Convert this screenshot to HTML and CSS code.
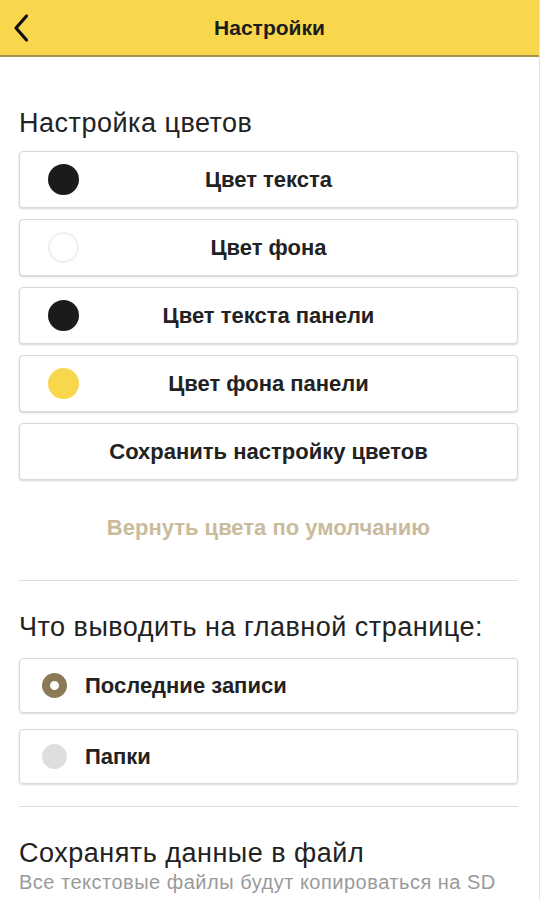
FILE: index.html
```html
<!DOCTYPE html>
<html lang="ru">
<head>
<meta charset="utf-8">
<title>Настройки</title>
<link rel="stylesheet" href="styles.css">
</head>
<body>
<div class="page">
  <header class="topbar">
    <button class="back" aria-label="Назад">
      <svg width="18" height="30" viewBox="0 0 18 30"><path d="M14.5 3 L4 15 L14.5 27" fill="none" stroke="#111" stroke-width="3.2" stroke-linecap="round" stroke-linejoin="round"/></svg>
    </button>
    <h1 class="title">Настройки</h1>
    <span class="spacer"></span>
  </header>

  <main class="content">
    <section class="section colors">
      <h2 class="section-title">Настройка цветов</h2>
      <div class="btn-list">
        <button class="btn"><span class="dot dot-black"></span><span class="btn-label">Цвет текста</span></button>
        <button class="btn"><span class="dot dot-white"></span><span class="btn-label">Цвет фона</span></button>
        <button class="btn"><span class="dot dot-black"></span><span class="btn-label">Цвет текста панели</span></button>
        <button class="btn"><span class="dot dot-yellow"></span><span class="btn-label">Цвет фона панели</span></button>
        <button class="btn"><span></span><span class="btn-label">Сохранить настройку цветов</span></button>
      </div>
      <div class="reset">Вернуть цвета по умолчанию</div>
    </section>

    <hr class="divider">

    <section class="section home">
      <h2 class="section-title">Что выводить на главной странице:</h2>
      <div class="radio-list">
        <label class="radio-row"><span class="radio radio-on"></span><span class="radio-label">Последние записи</span></label>
        <label class="radio-row"><span class="radio radio-off"></span><span class="radio-label">Папки</span></label>
      </div>
    </section>

    <hr class="divider">

    <section class="section file">
      <h2 class="section-title">Сохранять данные в файл</h2>
      <p class="hint">Все текстовые файлы будут копироваться на SD карту в отдельную папку</p>
    </section>
  </main>
</div>
</body>
</html>
```

FILE: styles.css
```css
* { box-sizing: border-box; }

html, body {
  margin: 0;
  padding: 0;
  background: #fff;
  height: 900px;
  overflow: hidden;
}

body {
  font-family: "Liberation Sans", Arial, sans-serif;
  color: #222;
}

.page {
  width: 540px;
  min-height: 900px;
  border-right: 1px solid #e4e4e4;
}

.topbar {
  height: 57px;
  background: #f8d74c;
  border-bottom: 2px solid #a99147;
  display: grid;
  grid-template-columns: 50px 1fr 50px;
  align-items: center;
  width: 539px;
}

.back {
  border: 0;
  background: none;
  padding: 0 0 0 12px;
  height: 55px;
  display: flex;
  align-items: center;
  cursor: pointer;
}

.title {
  margin: 0;
  text-align: center;
  font-size: 21px;
  font-weight: bold;
  color: #1c1c1c;
}

.content {
  padding: 0 21px 0 19px;
}

.section-title {
  margin: 0;
  font-size: 27px;
  font-weight: normal;
  letter-spacing: 0.5px;
  line-height: 28px;
  color: #222;
  white-space: nowrap;
}

.colors { padding-top: 52px; }
.colors .section-title { margin-bottom: 14px; }

.btn-list {
  display: flex;
  flex-direction: column;
  gap: 11px;
}

.btn {
  height: 57px;
  width: 100%;
  background: #fff;
  border: 1px solid #d9d9d9;
  border-radius: 4px;
  box-shadow: 0 1px 2px rgba(0,0,0,0.18);
  display: grid;
  grid-template-columns: 1fr auto 1fr;
  align-items: center;
  padding: 0 28px;
  font-family: inherit;
  cursor: pointer;
}

.btn-label {
  font-size: 22px;
  font-weight: bold;
  color: #222;
  white-space: nowrap;
}

.dot {
  width: 31px;
  height: 31px;
  border-radius: 50%;
  justify-self: start;
}
.dot-black { background: #1b1b1b; }
.dot-white { background: #fff; border: 2px solid #f0f0f0; }
.dot-yellow { background: #f8d74c; }

.reset {
  text-align: center;
  font-size: 22px;
  font-weight: bold;
  color: #c9bb9c;
  padding: 37px 0 41px;
  line-height: 22px;
}

.divider {
  border: 0;
  border-top: 1px solid #dcdcdc;
  margin: 0;
}

.home { padding-top: 32px; }
.home .section-title { margin-bottom: 17px; }

.radio-list {
  display: flex;
  flex-direction: column;
  gap: 16px;
  padding-bottom: 22px;
}

.radio-row {
  height: 55px;
  border: 1px solid #d9d9d9;
  border-radius: 4px;
  box-shadow: 0 1px 2px rgba(0,0,0,0.15);
  display: flex;
  align-items: center;
  padding-left: 22px;
  gap: 18px;
  cursor: pointer;
}

.radio {
  width: 25px;
  height: 25px;
  border-radius: 50%;
  flex: none;
}
.radio-on {
  border: 8px solid #8c7a57;
  background: #fff;
}
.radio-off {
  background: #dedede;
}

.radio-label {
  font-size: 22px;
  font-weight: bold;
  color: #222;
}

.file { padding-top: 32px; }

.hint {
  margin: 2px 0 0;
  font-size: 20px;
  letter-spacing: 0.5px;
  line-height: 26px;
  color: #9a9a9a;
}
```
